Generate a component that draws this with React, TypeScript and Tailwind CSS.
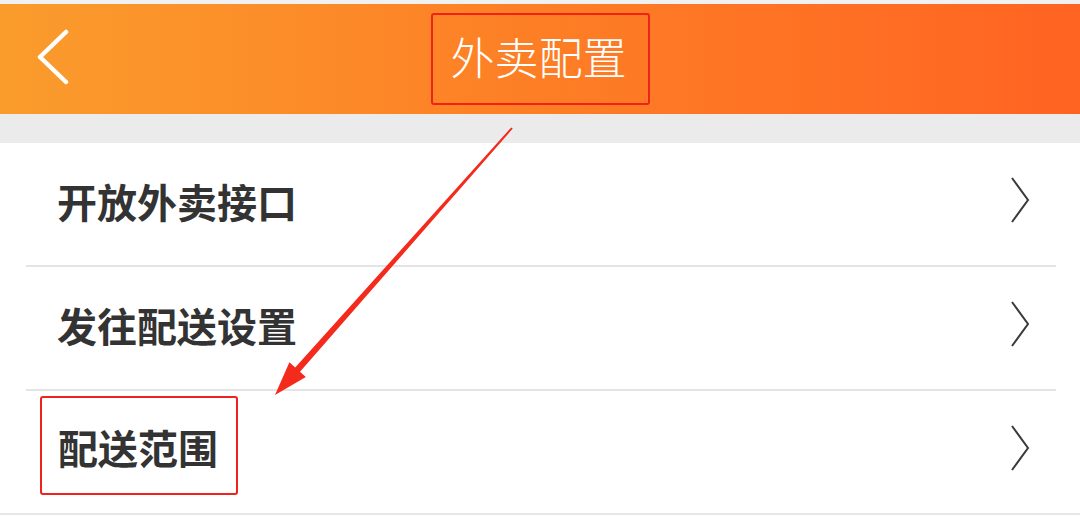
import React from "react";

const font = { fontFamily: '"Noto Sans CJK SC", "Noto Sans", sans-serif' };

function Chevron() {
  return (
    <svg width="20" height="46" viewBox="0 0 20 46" className="shrink-0">
      <polyline points="2,1 18,23 2,45" fill="none" stroke="#3a3a3a" strokeWidth="2" strokeLinejoin="miter" />
    </svg>
  );
}

function Row({ label, boxed, last }: { label: string; boxed?: boolean; last?: boolean }) {
  return (
    <div className="relative h-[124px] bg-white">
      <div className="flex h-[122px] items-start pr-[50px]">
        {boxed ? (
          <div className="ml-[40px] mt-[5px] flex h-[99px] w-[198px] items-center rounded-[3px] border-2 border-[#f0231c] pl-[16px] pt-[3px]">
            <span className="text-[40px] font-bold leading-none text-[#333333]">{label}</span>
          </div>
        ) : (
          <div className="ml-[57px] flex h-full items-center pb-[6px]">
            <span className="text-[40px] font-bold leading-none text-[#333333]">{label}</span>
          </div>
        )}
        <div className="ml-auto flex h-full items-center pb-[8px]">
          <Chevron />
        </div>
      </div>
      {last ? (
        <div className="h-[2px] w-full bg-[#e6e6e6]" />
      ) : (
        <div className="ml-[26px] mr-[24px] h-[2px] bg-[#e4e4e4]" />
      )}
    </div>
  );
}

export default function App() {
  return (
    <div className="relative h-[517px] w-[1080px] overflow-hidden bg-white" style={font}>
      <div className="h-[4px] bg-[#f1f1f1]" />
      <header className="grid h-[110px] grid-cols-[1fr_auto_1fr] items-center bg-gradient-to-r from-[#fa9c2c] via-[#fd7e25] to-[#ff6322]">
        <div className="flex items-center pl-[36px] pb-[4px]">
          <svg width="34" height="56" viewBox="0 0 34 56">
            <polyline points="30,3 4,28 30,53" fill="none" stroke="#ffffff" strokeWidth="4.5" strokeLinecap="round" strokeLinejoin="round" />
          </svg>
        </div>
        <div className="flex h-[92px] w-[219px] items-center rounded-[3px] border-2 border-[#f0231c] pl-[18px] pb-[7px]">
          <span className="text-[44px] font-light leading-none tracking-[0px] text-white">外卖配置</span>
        </div>
        <div />
      </header>
      <div className="h-[29px] bg-[#ebebeb]" />
      <Row label="开放外卖接口" />
      <Row label="发往配送设置" />
      <Row label="配送范围" boxed last />
      <svg className="pointer-events-none absolute left-0 top-0" width="1080" height="517" viewBox="0 0 1080 517">
        <polygon
          points="511.2,127.4 295.2,367.4 289.4,362.3 275,395 305.8,376.9 300,371.8 512.8,128.6"
          fill="#f42a1c"
        />
      </svg>
    </div>
  );
}
